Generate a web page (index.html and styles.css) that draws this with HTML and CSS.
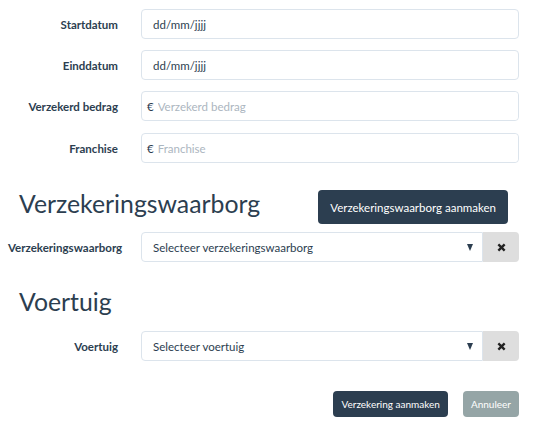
FILE: index.html
```html
<!DOCTYPE html>
<html lang="nl">
<head>
<meta charset="utf-8">
<title>Verzekering aanmaken</title>
<link rel="stylesheet" href="styles.css">
</head>
<body>
<form class="form">
  <div class="row">
    <label class="label">Startdatum</label>
    <div class="control"><input class="input" type="text" value="dd/mm/jjjj"></div>
  </div>
  <div class="row">
    <label class="label">Einddatum</label>
    <div class="control"><input class="input" type="text" value="dd/mm/jjjj"></div>
  </div>
  <div class="row row-wide">
    <label class="label">Verzekerd bedrag</label>
    <div class="control group"><span class="addon">€</span><input class="input bare" type="text" placeholder="Verzekerd bedrag"></div>
  </div>
  <div class="row row-last">
    <label class="label">Franchise</label>
    <div class="control group"><span class="addon">€</span><input class="input bare" type="text" placeholder="Franchise"></div>
  </div>

  <div class="section-head">
    <h2 class="heading">Verzekeringswaarborg</h2>
    <button type="button" class="btn btn-primary">Verzekeringswaarborg aanmaken</button>
  </div>
  <div class="row">
    <label class="label">Verzekeringswaarborg</label>
    <div class="control select-group">
      <div class="select"><span>Selecteer verzekeringswaarborg</span><span class="caret"></span></div>
      <button type="button" class="clear"><svg width="9" height="9" viewBox="0 0 10 10"><path d="M1.5 1.5 L8.5 8.5 M8.5 1.5 L1.5 8.5" stroke="#222" stroke-width="2.6" stroke-linecap="butt"/></svg></button>
    </div>
  </div>

  <div class="section-head section-head-2">
    <h2 class="heading">Voertuig</h2>
  </div>
  <div class="row">
    <label class="label">Voertuig</label>
    <div class="control select-group">
      <div class="select"><span>Selecteer voertuig</span><span class="caret"></span></div>
      <button type="button" class="clear"><svg width="9" height="9" viewBox="0 0 10 10"><path d="M1.5 1.5 L8.5 8.5 M8.5 1.5 L1.5 8.5" stroke="#222" stroke-width="2.6" stroke-linecap="butt"/></svg></button>
    </div>
  </div>

  <div class="actions">
    <button type="button" class="btn btn-sm btn-primary">Verzekering aanmaken</button>
    <button type="button" class="btn btn-sm btn-default">Annuleer</button>
  </div>
</form>
</body>
</html>
```

FILE: styles.css
```css
* { box-sizing: border-box; }
html, body { margin: 0; background: #fff; }
body {
  font-family: Lato, "Open Sans", "Liberation Sans", sans-serif;
  font-size: 11.5px;
  color: #2c3e50;
}
.form {
  padding: 9px 17px 0 8px;
}
.row {
  display: flex;
  align-items: center;
  margin-bottom: 11px;
}
.row-wide { margin-bottom: 12px; }
.row-last { margin-bottom: 0; }
.label {
  width: 110px;
  flex: none;
  text-align: right;
  font-weight: 700;
  white-space: nowrap;
  color: #2c3e50;
}
.control {
  flex: 1;
  margin-left: 23px;
}
.input {
  display: block;
  width: 100%;
  height: 30px;
  padding: 0 11px;
  border: 1px solid #dce4ec;
  border-radius: 4px;
  font: inherit;
  color: #2c3e50;
  background: #fff;
  outline: none;
}
.group {
  display: flex;
  align-items: center;
  height: 30px;
  border: 1px solid #dce4ec;
  border-radius: 4px;
  padding-left: 5px;
}
.addon { color: #2c3e50; }
.input.bare {
  border: none;
  height: 28px;
  padding: 0 0 0 4px;
}
.input::placeholder { color: #acb6c0; }
.section-head {
  display: flex;
  justify-content: space-between;
  align-items: flex-start;
  margin-top: 27px;
  margin-bottom: 8px;
  padding-left: 11px;
  padding-right: 11px;
}
.section-head-2 {
  margin-top: 26px;
  margin-bottom: 15px;
}
.heading {
  margin: 0;
  font-size: 24.8px;
  font-weight: 400;
  line-height: 28px;
  color: #2c3e50;
}
.btn {
  font: inherit;
  border: none;
  border-radius: 4px;
  color: #fff;
  cursor: pointer;
}
.btn-primary { background: #2c3e50; }
.btn-default { background: #95a5a6; }
.section-head .btn {
  height: 34px;
  padding: 0 12px;
}
.select-group {
  display: flex;
  height: 30px;
}
.select {
  flex: 1;
  display: flex;
  align-items: center;
  justify-content: space-between;
  border: 1px solid #dce4ec;
  border-radius: 4px 0 0 4px;
  padding: 0 9px 0 11px;
  color: #2c3e50;
}
.caret {
  width: 0;
  height: 0;
  border-left: 3.5px solid transparent;
  border-right: 3.5px solid transparent;
  border-top: 7px solid #2c3e50;
}
.clear {
  width: 36px;
  flex: none;
  border: none;
  background: #dedede;
  border-radius: 0 4px 4px 0;
  display: flex;
  align-items: center;
  justify-content: center;
  padding: 0;
}
.actions {
  display: flex;
  justify-content: flex-end;
  gap: 15px;
  margin-top: 30px;
}
.btn-sm {
  height: 26px;
  padding: 0 8px;
  font-size: 10px;
}
```
